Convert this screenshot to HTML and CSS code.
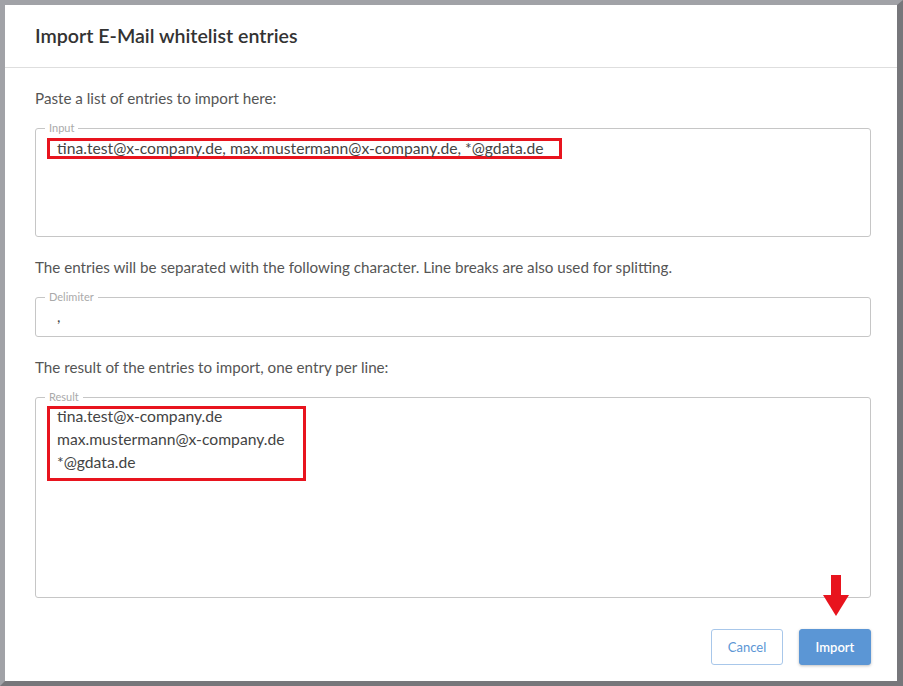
FILE: index.html
```html
<!DOCTYPE html>
<html lang="en">
<head>
  <meta charset="UTF-8">
  <title>Import E-Mail whitelist entries</title>
  <link rel="stylesheet" href="styles.css">
</head>
<body>
  <div class="dialog">
    <div class="dialog-header">
      <h1>Import E-Mail whitelist entries</h1>
    </div>

    <div class="dialog-body">
      <p class="hint">Paste a list of entries to import here:</p>
      <fieldset class="field field-input">
        <legend>Input</legend>
        <span class="mark">tina.test@x-company.de, max.mustermann@x-company.de, *@gdata.de</span>
      </fieldset>

      <p class="hint">The entries will be separated with the following character. Line breaks are also used for splitting.</p>
      <fieldset class="field field-delim">
        <legend>Delimiter</legend>
        <span class="plain">,</span>
      </fieldset>

      <p class="hint">The result of the entries to import, one entry per line:</p>
      <fieldset class="field field-result">
        <legend>Result</legend>
        <div class="mark mark-list">
          <div>tina.test@x-company.de</div>
          <div>max.mustermann@x-company.de</div>
          <div>*@gdata.de</div>
        </div>
      </fieldset>
    </div>

    <div class="dialog-footer">
      <button class="btn btn-cancel">Cancel</button>
      <button class="btn btn-primary">Import</button>
    </div>

    <!-- callout arrow pointing at the import button -->
    <svg class="arrow" width="26" height="42" viewBox="0 0 26 42">
      <rect x="8" y="0" width="10" height="21" fill="#e8141e"/>
      <polygon points="0,20 26,20 13,41" fill="#e8141e"/>
    </svg>
  </div>
</body>
</html>
```

FILE: styles.css
```css
* {
  box-sizing: border-box;
}

html, body {
  margin: 0;
  height: 686px;
}

body {
  font-family: 'Lato', 'Open Sans', sans-serif;
  color: #444;
}

.dialog {
  position: relative;
  height: 686px;
  background: #fff;
  border-style: solid;
  border-width: 5px 6px 5px 5px;
  border-color: #a1a2a7 #77777b #77777b #a1a2a7;
  display: flex;
  flex-direction: column;
}

.dialog-header {
  height: 63px;
  border-bottom: 1px solid #dedede;
  padding: 0 30px;
  display: flex;
  align-items: center;
}

.dialog-header h1 {
  margin: 0 0 2px;
  font-size: 19.6px;
  font-weight: 600;
  color: #333;
}

.dialog-body {
  padding: 0 26px 0 30px;
}

.hint {
  margin: 20px 0 0;
  font-size: 15.2px;
  line-height: 20px;
  color: #555;
}

.field {
  margin: 14px 0 0;
  border: 1px solid #c6c6c6;
  border-radius: 3px;
  padding: 0 11px;
  min-width: 0;
}

.field legend {
  font-size: 11px;
  line-height: 12px;
  color: #aaa;
  padding: 0 4px;
  margin-left: -2px;
}

.field-input {
  height: 115px;
  padding-top: 4px;
}

.field-delim {
  height: 46px;
}

.field-result {
  height: 207px;
  padding-top: 3px;
}

.mark {
  display: inline-block;
  border: 3px solid #e8141e;
  padding: 0 15px 0 7px;
  font-size: 15.7px;
  line-height: 15px;
  color: #444;
}

.mark-list {
  line-height: 23px;
  padding: 0 18px 4px 7px;
}

.mark-list div:first-child {
  margin-top: -4px;
}

.plain {
  display: block;
  padding: 4px 10px;
  font-size: 15px;
}

.dialog-footer {
  margin-top: auto;
  padding: 0 26px 16px 30px;
  display: flex;
  justify-content: flex-end;
  gap: 16px;
}

.btn {
  font-family: inherit;
  font-size: 13px;
  height: 36px;
  width: 72px;
  border-radius: 3px;
  cursor: pointer;
}

.btn-cancel {
  background: #fff;
  border: 1px solid #a8c7ea;
  color: #5b96d5;
}

.btn-primary {
  background: #5b96d5;
  border: 1px solid #5b96d5;
  color: #fff;
  font-weight: 600;
  box-shadow: 0 1px 3px rgba(0, 0, 0, 0.25);
}

.arrow {
  position: absolute;
  left: 818px;
  top: 570px;
}
```
